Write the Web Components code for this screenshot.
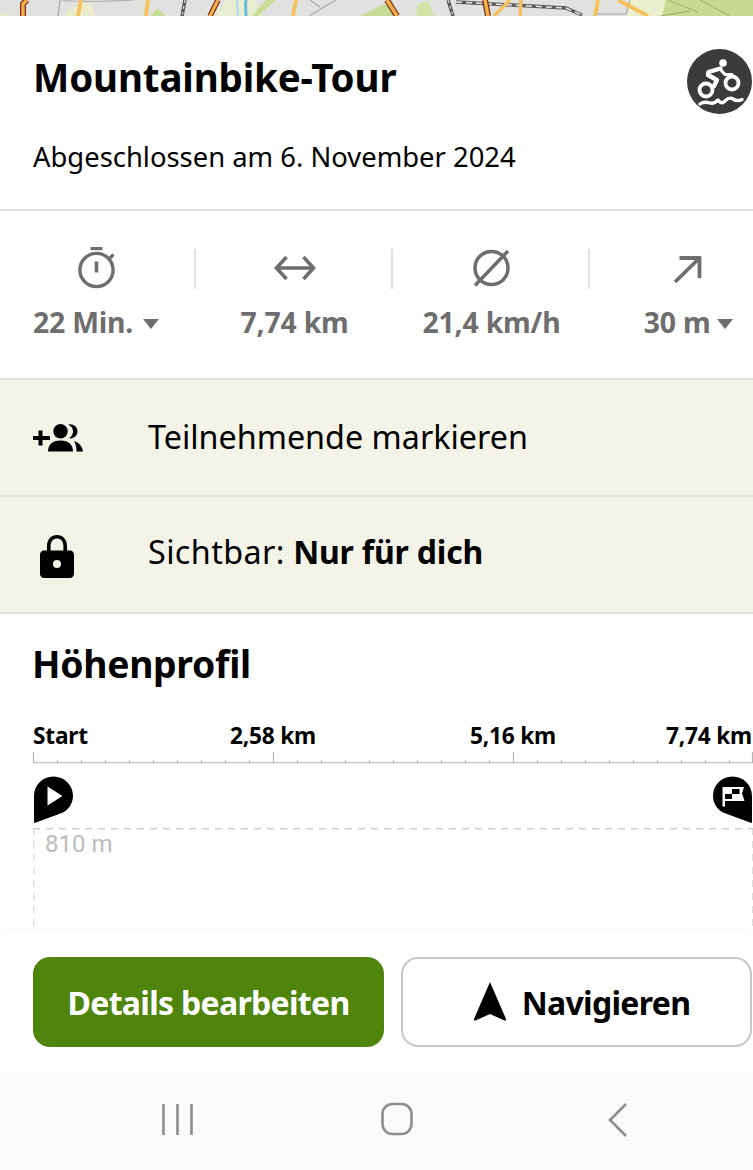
<!DOCTYPE html>
<html lang="de">
<head>
<meta charset="utf-8">
<title>Mountainbike-Tour</title>
<style>
    html, body{
        margin: 0;
        padding: 0;
        background: #fff;
    }
    body{
        font-family: "Noto Sans", "Open Sans", sans-serif;
        width: 753px;
        height: 1170px;
        overflow: hidden;
    }
    tour-page{
        height: 1170px;
    }
</style>
</head>
<body>
<tour-page>
    <map-strip></map-strip>
    <tour-header title-text="Mountainbike-Tour" sub-text="Abgeschlossen am 6. November 2024"></tour-header>
    <stat-list>
        <tour-stat icon="timer" value="22 Min." caret></tour-stat>
        <tour-stat icon="distance" value="7,74 km"></tour-stat>
        <tour-stat icon="speed" value="21,4 km/h"></tour-stat>
        <tour-stat icon="up" value="30 m" caret></tour-stat>
    </stat-list>
    <action-row icon="people">Teilnehmende markieren</action-row>
    <action-row icon="lock"><span>Sichtbar:</span> <b>Nur für dich</b></action-row>
    <height-profile></height-profile>
    <action-bar></action-bar>
    <nav-bar></nav-bar>
</tour-page>

<script>
function createSVGElement(name){
    return document.createElementNS("http://www.w3.org/2000/svg", name);
}

const ICONS = {
    timer: `<svg width="42" height="42" viewBox="0 0 42 42" fill="none" stroke="#6e6e6e">
        <path d="M14.500 1.500h12" stroke-width="3.400"/>
        <circle cx="20.500" cy="23" r="16.600" stroke-width="3.400"/>
        <path d="M20.500 14.500v11" stroke-width="3.600"/>
        <path d="M34 11l3.500-3.500" stroke-width="3.200"/>
    </svg>`,
    distance: `<svg width="42" height="42" viewBox="0 0 42 42" fill="none" stroke="#6e6e6e" stroke-width="3.600">
        <path d="M2 21h38"/>
        <path d="M12.500 10L2.500 21l10 11"/>
        <path d="M29.500 10L39.500 21l-10 11"/>
    </svg>`,
    speed: `<svg width="42" height="42" viewBox="0 0 42 42" fill="none" stroke="#6e6e6e" stroke-width="3.500">
        <circle cx="20.500" cy="21" r="16.500"/>
        <path d="M4 38.500L37 4"/>
    </svg>`,
    up: `<svg width="42" height="42" viewBox="0 0 42 42" fill="none" stroke="#6e6e6e" stroke-width="3.800">
        <path d="M11.500 11h20v20"/>
        <path d="M31.500 11L7 35"/>
    </svg>`,
    people: `<svg width="50" height="30" viewBox="0 0 50 30" fill="#000">
        <path d="M0 13h5.500V7.500h4V13H17v4H9.500v5.500h-4V17H0z"/>
        <circle cx="27.500" cy="8.300" r="7.200"/>
        <path d="M15 28.500c0-6.500 4-11 12.500-11S40 22 40 28.500z"/>
        <path d="M35 1.300c5.500-.8 9.500 2.500 9.500 7s-4 7.800-8.500 7c2.700-1.800 4-4.200 4-7s-1.800-5.400-5-7z"/>
        <path d="M41 18c5 1.400 8.200 5 9 10.500h-6.500C43.500 24.500 42.800 21 41 18z"/>
    </svg>`,
    lock: `<svg width="36" height="44" viewBox="0 0 36 44" fill="#000">
        <path fill-rule="evenodd" d="M8 16.500V12C8 5.500 12 1 18 1s10 4.500 10 11v4.500h3c2.200 0 4 1.800 4 4V40c0 2.200-1.800 4-4 4H5c-2.200 0-4-1.800-4-4V20.500c0-2.200 1.800-4 4-4zm3.600 0h12.800V12c0-4.500-2.500-7.500-6.400-7.500S11.600 7.500 11.600 12zM18 26a4 4 0 1 0 0 8 4 4 0 0 0 0-8z"/>
    </svg>`
};

class MapStrip extends HTMLElement{
    constructor(){
        super();
        this.attachShadow({ mode: 'open'});
        this.shadowRoot.innerHTML = `
        <style>
            :host{ display: block; height: 16px; background: #e1e1e0; overflow: hidden; }
            svg{ display: block; }
        </style>
        <svg width="753" height="16" viewBox="0 0 753 16" fill="none">
            <path d="M0 13l12 3H0z" fill="#e6eccb"/>
            <path d="M70 8l20-6 6 14H64z" fill="#e8eccc"/>
            <path d="M150 16l8-8 8 8z" fill="#c9dc97"/>
            <path d="M214 16l12-16h30l6 16z" fill="#e9edcf"/>
            <path d="M252 16l14-16h10l-18 16z" fill="#c9dc97"/>
            <path d="M360 16l32-16 2 16z" fill="#c9dc97"/>
            <path d="M416 16l2-12 10-3 6 15z" fill="#d3e2a6"/>
            <path d="M628 0h125v16H628z" fill="#eaeecd"/>
            <path d="M662 16l4-16h87v16z" fill="#c9d98d"/>
            <path d="M27 0l-4 4v12" stroke="#7a2f16" stroke-width="6"/>
            <path d="M27 0l-4 4v12" stroke="#f4b04a" stroke-width="3.500"/>
            <path d="M58 16l2-16" stroke="#9a9a9a" stroke-width="1"/>
            <path d="M62 0c15 3 50 1 72 0" stroke="#b4b4b4" stroke-width="1.200"/>
            <path d="M81 0l-3 16" stroke="#f5c262" stroke-width="4"/>
            <path d="M148 0l-2 16" stroke="#f5c262" stroke-width="4"/>
            <path d="M185 0l-3 16" stroke="#555" stroke-width="3.500"/>
            <path d="M185 0l-3 16" stroke="#ddd" stroke-width="1.200" stroke-dasharray="3 3"/>
            <path d="M218 0l-8 16" stroke="#7a2f16" stroke-width="5.500"/>
            <path d="M218 0l-8 16" stroke="#f4b04a" stroke-width="3"/>
            <path d="M237 0c0 6 1 10 1 16" stroke="#b4dcea" stroke-width="2.500"/>
            <path d="M246 0c-1 6 0 10 0 16" stroke="#66bbdd" stroke-width="3"/>
            <path d="M296 0l-3 16" stroke="#f5c262" stroke-width="4"/>
            <path d="M310 0l10 7M336 0l-27 16" stroke="#a9a9a9" stroke-width="1.200"/>
            <path d="M387 0l10 16" stroke="#7a2f16" stroke-width="6"/>
            <path d="M387 0l10 16" stroke="#f4b04a" stroke-width="3.500"/>
            <path d="M448 0l5 16" stroke="#555" stroke-width="3.500"/>
            <path d="M448 0l5 16" stroke="#ddd" stroke-width="1.200" stroke-dasharray="3 3"/>
            <path d="M456 2l110 6 16 7" stroke="#5b5b5b" stroke-width="3.500"/>
            <path d="M456 2l110 6 16 7" stroke="#e8e8e8" stroke-width="1.500" stroke-dasharray="6 4"/>
            <path d="M485 0l3 16" stroke="#7a2f16" stroke-width="6"/>
            <path d="M485 0l3 16" stroke="#f4b04a" stroke-width="3.500"/>
            <path d="M510 0l-16 16" stroke="#f5c262" stroke-width="3.500"/>
            <path d="M521 0l-1 16" stroke="#f5c262" stroke-width="3.500"/>
            <path d="M598 0l-3 16" stroke="#f5c262" stroke-width="4"/>
            <path d="M596 14h30l4-14" stroke="#a9a9a9" stroke-width="1.200"/>
            <path d="M618 0l30 16" stroke="#f5c262" stroke-width="4"/>
            <path d="M660 16l30-5M668 0l30 12M700 0l30 16" stroke="#9fb069" stroke-width="1"/>
        </svg>`;
    }
}

class TourHeader extends HTMLElement{
    constructor(){
        super();
        this.attachShadow({ mode: 'open'});
    }
    connectedCallback(){
        this.shadowRoot.innerHTML = `
        <style>
            :host{
                display: flex;
                justify-content: space-between;
                align-items: flex-start;
                box-sizing: border-box;
                height: 195px;
                padding: 36px 0 0 33px;
                border-bottom: 2px solid #e0e0e0;
                background: #fff;
            }
            h1{
                margin: 0;
                font-size: 38.500px;
                line-height: 50px;
                font-weight: 700;
                color: #000;
                letter-spacing: -0.150px;
            }
            p{
                margin: 37px 0 0;
                font-size: 27.400px;
                line-height: 36px;
                color: #000;
            }
            .badge{
                flex: none;
                width: 65px;
                height: 65px;
                margin: -3px 1px 0 0;
                border-radius: 50%;
                background: #3b3b3b;
            }
        </style>
        <div>
            <h1>${this.getAttribute("title-text")}</h1>
            <p>${this.getAttribute("sub-text")}</p>
        </div>
        <svg class="badge" viewBox="0 0 65 65" fill="none">
            <circle cx="36" cy="14" r="3.800" fill="#fff"/>
            <path d="M33.500 19.500L21.500 23l-.5 3 9 5-3 6" stroke="#fff" stroke-width="4.400" stroke-linejoin="round" stroke-linecap="round"/>
            <path d="M33 20l5 5.500h7" stroke="#fff" stroke-width="3.200" stroke-linecap="round" stroke-linejoin="round"/>
            <circle cx="19" cy="41" r="6.500" stroke="#fff" stroke-width="3.800"/>
            <circle cx="45" cy="34" r="6.500" stroke="#fff" stroke-width="3.800"/>
            <path d="M13 55c4-3 7-2 10-1s5 0 8-3c3 4 5 3 7 1 3-3 5-4 8-2s6 2 9 .5" stroke="#fff" stroke-width="3.400" stroke-linecap="round" stroke-linejoin="round"/>
        </svg>`;
    }
}

class StatList extends HTMLElement{
    constructor(){
        super();
        this.attachShadow({ mode: 'open'});
        this.shadowRoot.innerHTML = `
        <style>
            :host{
                display: grid;
                grid-template-columns: 196px 197px 197px 197px;
                box-sizing: border-box;
                height: 169px;
                padding-top: 36px;
                border-bottom: 2px solid #e0e0e0;
                background: #fff;
                overflow: hidden;
            }
        </style>
        <slot></slot>`;
    }
}

class TourStat extends HTMLElement{
    constructor(){
        super();
        this.attachShadow({ mode: 'open'});
    }
    connectedCallback(){
        const caret = this.hasAttribute("caret") ? `<i></i>` : "";
        this.shadowRoot.innerHTML = `
        <style>
            :host{
                display: block;
                position: relative;
                color: #6e6e6e;
                text-align: center;
            }
            :host(:not(:last-child))::after{
                content: "";
                position: absolute;
                right: 0;
                top: 2px;
                width: 2px;
                height: 40px;
                background: #e0e0e0;
            }
            .icon{
                display: flex;
                justify-content: center;
                height: 42px;
            }
            .value{
                display: flex;
                justify-content: center;
                align-items: center;
                gap: 10px;
                margin-top: 16px;
                font-size: 28.400px;
                line-height: 34px;
                font-weight: 700;
                letter-spacing: -0.200px;
                white-space: nowrap;
            }
            :host(:first-child) .icon{ padding-right: 2px; }
            :host(:first-child) .value{ padding-right: 4px; }
            :host(:last-child) .value{ gap: 7px; }
            i{
                width: 0;
                height: 0;
                border-left: 8px solid transparent;
                border-right: 8px solid transparent;
                border-top: 10px solid #6e6e6e;
                margin-top: 4px;
            }
        </style>
        <div class="icon">${ICONS[this.getAttribute("icon")]}</div>
        <div class="value"><span>${this.getAttribute("value")}</span>${caret}</div>`;
    }
}

class ActionRow extends HTMLElement{
    constructor(){
        super();
        this.attachShadow({ mode: 'open'});
    }
    connectedCallback(){
        this.shadowRoot.innerHTML = `
        <style>
            :host{
                display: flex;
                align-items: center;
                box-sizing: border-box;
                height: 117px;
                padding-left: 33px;
                border-bottom: 2px solid #e0e0dc;
                background: #f3f3e7;
                color: #000;
                font-size: 32.300px;
            }
            .icon{
                flex: none;
                display: flex;
                width: 115px;
            }
            .text{ margin-top: -4px; }
            :host([icon="lock"]) .text{ margin-top: -7px; }
            :host([icon="lock"]) .icon{
                padding-left: 6px;
                width: 109px;
                margin-top: 2px;
            }
            ::slotted(span){
                letter-spacing: 0.400px;
            }
            ::slotted(b){
                font-weight: 700;
                font-size: 32px;
                letter-spacing: -0.200px;
            }
        </style>
        <div class="icon">${ICONS[this.getAttribute("icon")]}</div>
        <div class="text"><slot></slot></div>`;
    }
}

class HeightProfile extends HTMLElement{
    constructor(){
        super();
        this.attachShadow({ mode: 'open'});
        this.shadowRoot.innerHTML = `
        <style>
            :host{
                display: block;
                flex: 1;
                min-height: 0;
                overflow: hidden;
                background: #fff;
            }
            h2{
                margin: 26px 0 0 32px;
                font-size: 37.300px;
                line-height: 48px;
                font-weight: 700;
                color: #000;
                letter-spacing: -0.300px;
            }
            .labels{
                display: grid;
                grid-template-columns: 120px 240px 240px 120px;
                margin: 33px 0 0 33px;
                height: 30px;
                font-size: 22.700px;
                line-height: 30px;
                font-weight: 700;
                color: #000;
                letter-spacing: -0.200px;
                white-space: nowrap;
            }
            .labels span{ justify-self: center; }
            .labels span:first-child{ justify-self: start; }
            .labels span:last-child{ justify-self: end; margin-right: 1px; }
            .axis{ display: block; margin-top: 1px; }
            .pins{
                display: flex;
                justify-content: space-between;
                margin: 12px 0 0 33px;
                height: 46px;
            }
            .chart{
                box-sizing: border-box;
                height: 140px;
                margin: 6px 0 0 33px;
                padding: 2px 0 0 12px;
                background:
                    repeating-linear-gradient(90deg, #cfcfcf 0 7px, transparent 7px 13px) left top / 100% 1.500px no-repeat,
                    repeating-linear-gradient(180deg, #dedede 0 7px, transparent 7px 13px) left top / 1.500px 100% no-repeat,
                    repeating-linear-gradient(180deg, #dedede 0 7px, transparent 7px 13px) right top / 1.500px 100% no-repeat;
                font-size: 24px;
                line-height: 28px;
                color: #bcbcbc;
                font-family: Roboto, "Noto Sans", sans-serif;
            }
        </style>
        <h2>Höhenprofil</h2>
        <div class="labels">
            <span>Start</span><span>2,58 km</span><span>5,16 km</span><span>7,74 km</span>
        </div>
        <svg class="axis" width="753" height="12" viewBox="0 0 753 12"></svg>
        <div class="pins">
            <svg width="40" height="47" viewBox="0 0 40 47">
                <path d="M1 46.500V20C1 9 9.500 .500 20.500 .500S40 9 40 20c0 7.500-4.500 13.500-10 16.500L3 46.500c-1 .4-2 .5-2 0z" fill="#000"/>
                <path d="M14.500 10.500l15 9.500-15 9.500z" fill="#fff"/>
            </svg>
            <svg width="40" height="47" viewBox="0 0 40 47">
                <path d="M39 46.500V20C39 9 30.500 .500 19.500 .500S0 9 0 20c0 7.500 4.500 13.500 10 16.500L37 46.500c1 .4 2 .5 2 0z" fill="#000"/>
                <path d="M9.500 30.500V11h21.500l-2 6.500 2.500 7.500H12v5.500z" fill="#fff"/>
                <path d="M12 18h7v5h-7zM19 13h7.500v5H19z" fill="#000"/>
            </svg>
        </div>
        <div class="chart">810 m</div>`;
        this.drawAxis();
    }

    // axis ticks, a long one every 10 small ones
    drawAxis(){
        const axis = this.shadowRoot.querySelector(".axis");
        const line = createSVGElement("path");
        let d = "M33 10.750H753";
        for(let i=0; i<=30; i++){
            const x = 33.5 + 24 * i - (i == 30 ? 1 : 0);
            const y = i % 10 == 0 ? 0 : 8;
            d += `M${x} ${y}V11`;
        }
        line.setAttribute("d", d);
        line.setAttribute("stroke", "#b4b4b4");
        line.setAttribute("stroke-width", "1.200");
        line.setAttribute("fill", "none");
        axis.appendChild(line);
    }
}

class ActionBar extends HTMLElement{
    constructor(){
        super();
        this.attachShadow({ mode: 'open'});
        this.shadowRoot.innerHTML = `
        <style>
            :host{
                display: grid;
                grid-template-columns: 351px 351px;
                gap: 17px;
                flex: none;
                box-sizing: border-box;
                height: 140px;
                padding: 25px 0 0 33px;
                background: #fff;
                box-shadow: 0 -2px 6px rgba(0,0,0,0.03);
            }
            button{
                display: flex;
                justify-content: center;
                align-items: center;
                gap: 15px;
                box-sizing: border-box;
                height: 90px;
                padding: 0;
                border-radius: 17px;
                font: 700 32px "Noto Sans", sans-serif;
                letter-spacing: -0.700px;
            }
            .primary{
                background: #4f850d;
                border: 0;
                color: #fff;
            }
            .secondary{
                background: #fff;
                border: 2px solid #c8c8c8;
                color: #000;
                padding-left: 10px;
            }
        </style>
        <button class="primary">Details bearbeiten</button>
        <button class="secondary">
            <svg width="34" height="40" viewBox="0 0 34 40"><path d="M17 0L33 37c.4 1-.5 2-1.500 1.500L17 32 2.500 38.500C1.500 39 .6 38 1 37z" fill="#000"/></svg>
            <span>Navigieren</span>
        </button>`;
    }
}

class NavBar extends HTMLElement{
    constructor(){
        super();
        this.attachShadow({ mode: 'open'});
        this.shadowRoot.innerHTML = `
        <style>
            :host{
                display: block;
                flex: none;
                height: 98px;
                background: #fbfaf8;
            }
            svg{ display: block; }
        </style>
        <svg width="753" height="98" viewBox="0 0 753 98" fill="none" stroke="#8e8e8e" stroke-width="2.600">
            <path d="M163.500 32v31M177.500 32v31M191.500 32v31"/>
            <rect x="382.500" y="32" width="29" height="30" rx="10"/>
            <path d="M626 32l-16 16 16 16"/>
        </svg>`;
    }
}

class TourPage extends HTMLElement{
    constructor(){
        super();
        this.attachShadow({ mode: 'open'});
        this.shadowRoot.innerHTML = `
        <style>
            :host{
                display: flex;
                flex-direction: column;
                width: 753px;
            }
        </style>
        <slot></slot>`;
    }
}

customElements.define("map-strip", MapStrip);
customElements.define("tour-header", TourHeader);
customElements.define("stat-list", StatList);
customElements.define("tour-stat", TourStat);
customElements.define("action-row", ActionRow);
customElements.define("height-profile", HeightProfile);
customElements.define("action-bar", ActionBar);
customElements.define("nav-bar", NavBar);
customElements.define("tour-page", TourPage);
</script>
</body>
</html>
